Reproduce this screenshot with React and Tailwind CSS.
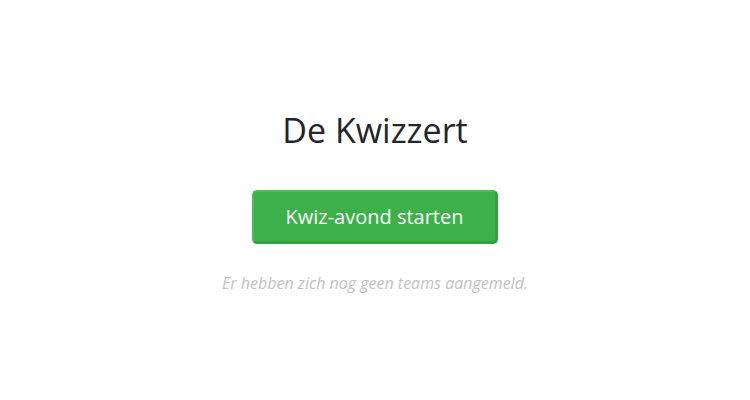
export default function App() {
  return (
    <div className="w-[750px] h-[400px] bg-white flex flex-col items-center pt-[110px]" style={{ fontFamily: '"Open Sans", sans-serif' }}>
      <h1 className="text-[34px] leading-[40px] text-[#222529] font-normal">De Kwizzert</h1>
      <button className="mt-[40px] w-[246px] h-[54px] rounded-[5px] bg-[#3cb14a] border-t-2 border-l-2 border-r-[3px] border-b-[3px] border-t-[#46c054] border-l-[#46c054] border-r-[#33a043] border-b-[#33a043] text-white text-[20px] leading-[28px] flex items-center justify-center">
        Kwiz-avond starten
      </button>
      <p className="mt-[27px] text-[16px] leading-[24px] italic text-[#c4bfc0]">Er hebben zich nog geen teams aangemeld.</p>
    </div>
  );
}
